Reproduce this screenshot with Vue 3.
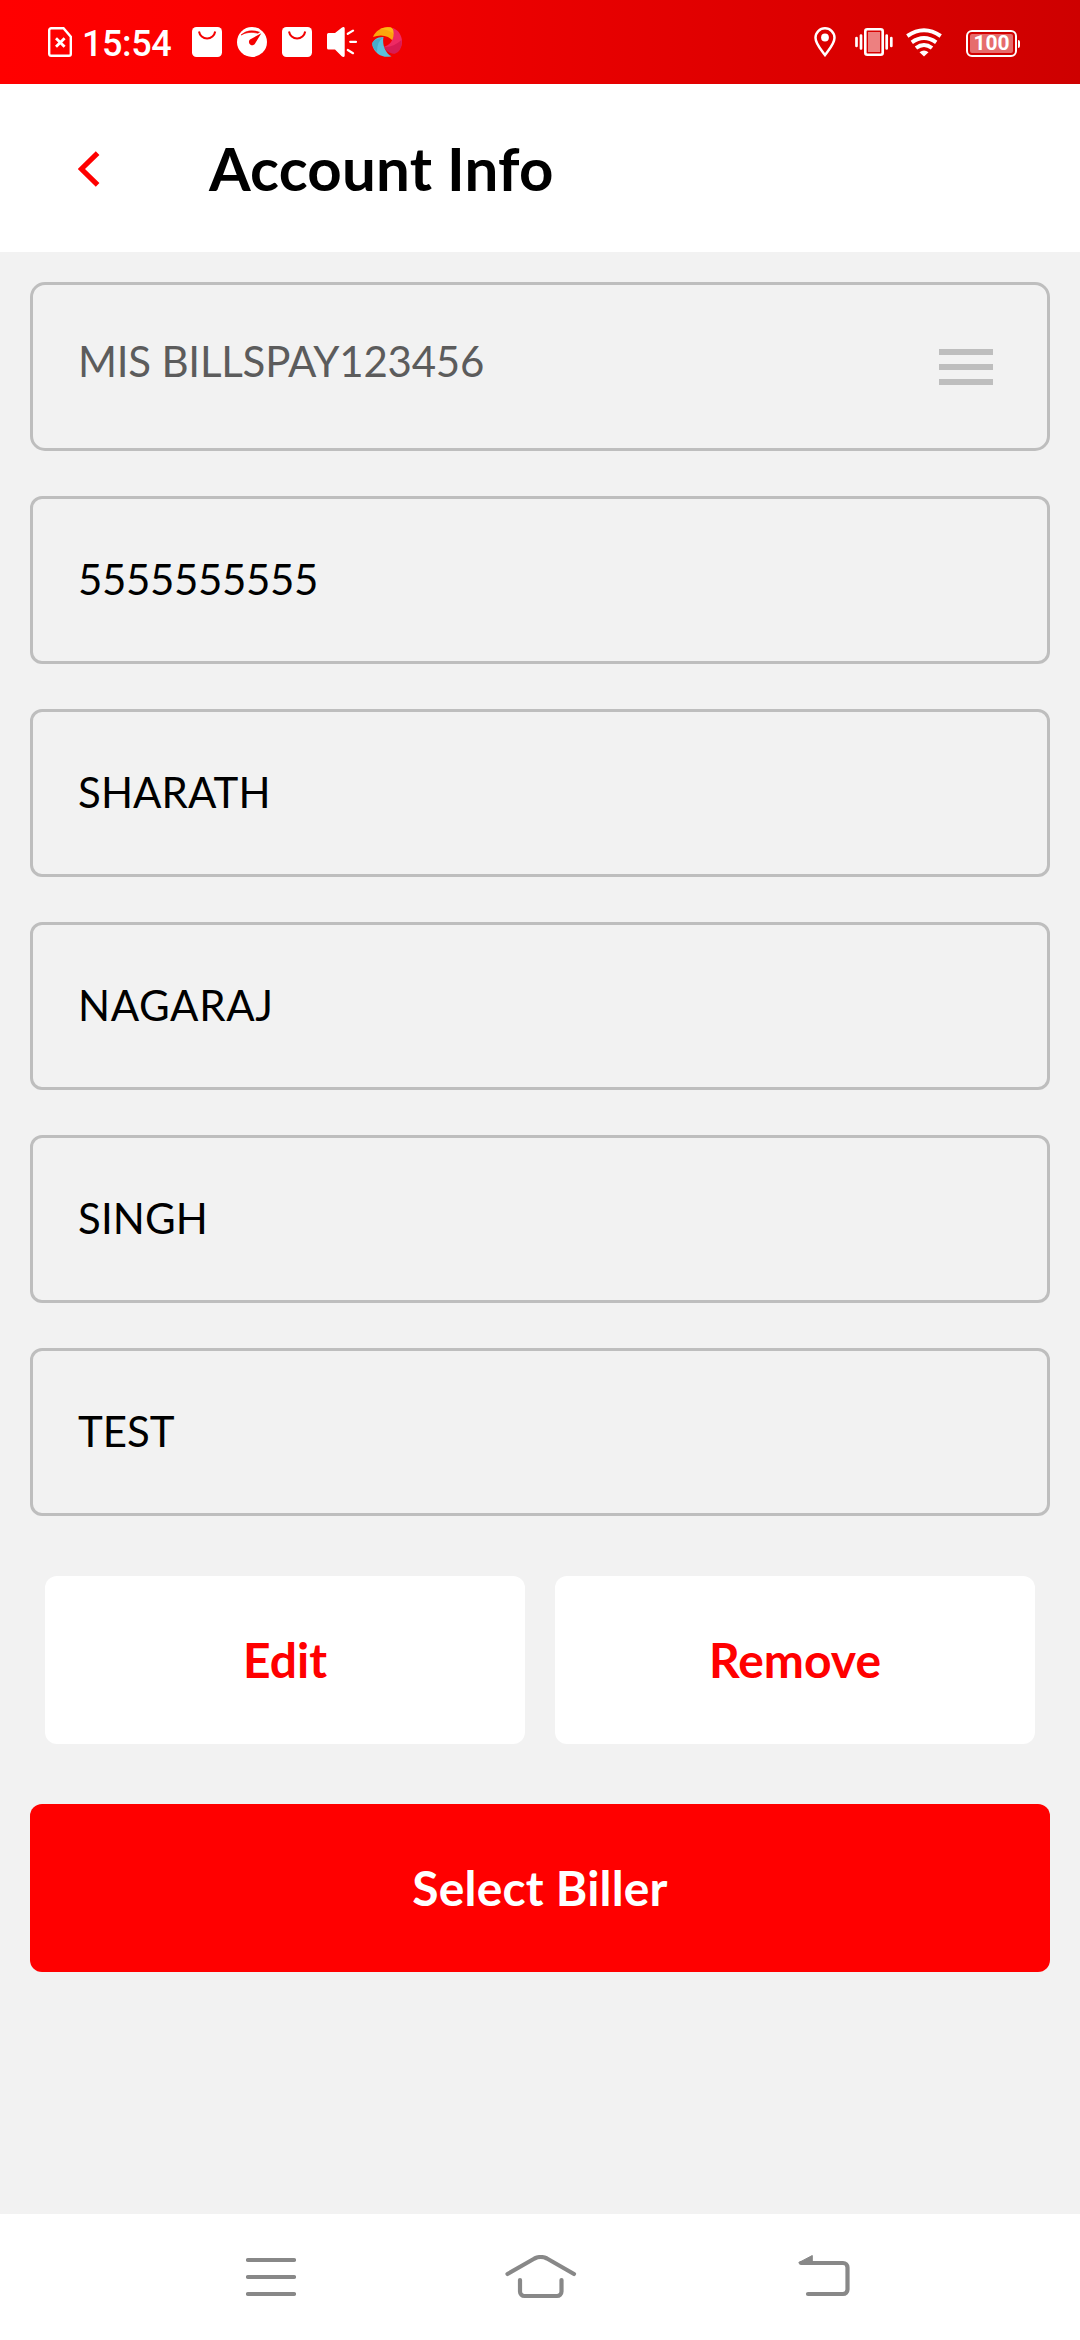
<script setup>
const fields = [
  { text: '5555555555', tracking: -0.36 },
  { text: 'SHARATH', tracking: 0.1 },
  { text: 'NAGARAJ', tracking: 0.65 },
  { text: 'SINGH', tracking: 0.1 },
  { text: 'TEST', tracking: 0 }
]
</script>

<template>
  <div class="screen">
    <div class="status">
      <svg class="sim" width="24" height="30" viewBox="0 0 24 30" fill="none" stroke="#fff" stroke-width="2.4">
        <path d="M3.2 1.2H15.5L22.8 9.8V27a1.8 1.8 0 0 1-1.8 1.8H3.2A2 2 0 0 1 1.2 27V3.200a2 2 0 0 1 2-2z" />
        <path d="M8 11.2l8.6 8.6M16.6 11.2L8 19.8" stroke-width="2.8" />
      </svg>
      <span class="time">15:54</span>
      <div class="notes">
        <svg width="30" height="30" viewBox="0 0 30 30">
          <rect width="30" height="30" rx="4.5" fill="#fff" />
          <path d="M7 4.5a8.2 8.2 0 0 0 16.2 0" fill="none" stroke="#f40000" stroke-width="2" />
        </svg>
        <svg width="30" height="30" viewBox="0 0 30 30">
          <circle cx="15" cy="15" r="15" fill="#fff" />
          <path d="M4 8Q11.5 1.2 22.5 5.2L20.8 6.2Q11.5 3.9 4 8z" fill="#f40000" stroke="#f40000" stroke-width=".6" />
          <path d="M24.3 6.3L18.4 15.9A3.3 3.3 0 1 1 13 12.5z" fill="#f40000" />
        </svg>
        <svg width="30" height="30" viewBox="0 0 30 30">
          <rect width="30" height="30" rx="4.5" fill="#fff" />
          <path d="M7 4.5a8.2 8.2 0 0 0 16.2 0" fill="none" stroke="#f10000" stroke-width="2" />
        </svg>
        <svg width="30" height="30" viewBox="0 0 30 30">
          <path d="M1.5 6H8L15 .4Q17.7-.8 17.7 1.5v27q0 2.3-2.7 1.1L8 22.5H1.5Q0 22.5 0 21V7.5Q0 6 1.5 6z" fill="#fff" />
          <path d="M20.8 6.8L26 3.6M23.2 14.8H29M20.8 23L26 26.2" stroke="#fff" stroke-width="2.2" stroke-linecap="round" />
        </svg>
        <svg width="30" height="30" viewBox="0 0 30 30">
          <path d="M1 10C4 3 11-1 19 .6C23 3 24.5 9 21.5 14.5C17 8.5 9 7 1 10z" fill="#fca50c" />
          <path d="M8 2Q14-.8 19 .6Q23 3 23 8Q17 2 8 2z" fill="#fdb913" />
          <path d="M20.5 .8C28 3.5 32 12 29 20C25.5 24.5 18 25.5 11.5 20C19 18.5 24 10 20.5 .8z" fill="#ee2a63" />
          <path d="M12 20C18 20.5 24 18 29.5 13C31 23 24 28 20 26.5Q14.5 25 12 20z" fill="#d81b54" />
          <path d="M11.5 10C10 17 13 26 19.5 29.3C11 31.5 3 27 .5 19C-.2 14 4 10 11.5 10z" fill="#5bc0dc" />
          <path d="M0 16Q3 11.5 11 11Q5 14 5 25Q.5 21 0 16z" fill="#48adc9" />
        </svg>
      </div>
      <div class="system">
        <svg width="22" height="30" viewBox="0 0 22 30">
          <path d="M11 1.3a9.5 9.5 0 0 1 9.5 9.5C20.5 17 15 22.5 11 28C7 22.5 1.5 17 1.5 10.8A9.5 9.5 0 0 1 11 1.3z" fill="none" stroke="#fff" stroke-width="2.5" />
          <circle cx="11" cy="10.5" r="3.9" fill="#fff" />
        </svg>
        <svg class="vibrate" width="38" height="28" viewBox="0 0 38 28">
          <rect x="10.3" y="1.3" width="17.4" height="25.4" rx="2" fill="none" stroke="#fff" stroke-width="2.6" />
          <rect x="13" y="4" width="12" height="20" fill="#ed8080" />
          <path d="M1.5 10v8M6 7.5v13M31.7 7.5v13M36.3 10v8" stroke="#fff" stroke-width="2.7" stroke-linecap="round" />
        </svg>
        <svg class="wifi" width="36" height="29" viewBox="0 0 36 29">
          <g fill="none" stroke="#fff" stroke-width="4">
            <path d="M1.3 8Q18-3.4 34.7 8" />
            <path d="M5.800 14.300Q18 5.800 30.200 14.300" />
            <path d="M10 20Q18 14 26 20" />
          </g>
          <path d="M13.5 24.2Q18 20.8 22.5 24.2L18 28.500z" fill="#fff" />
        </svg>
        <div class="battery"><span>100</span></div>
        <i class="tip"></i>
      </div>
    </div>

    <header>
      <svg width="22" height="36" viewBox="0 0 22 36">
        <path d="M19.6 2.2L3.4 18L19.6 33.8" fill="none" stroke="#f00" stroke-width="5.2" />
      </svg>
      <h1>Account Info</h1>
    </header>

    <main>
      <div class="field picker">
        <span>MIS BILLSPAY123456</span>
        <div class="bars"><i></i><i></i><i></i></div>
      </div>
      <div v-for="f in fields" :key="f.text" class="field">
        <span :style="{ letterSpacing: f.tracking + 'px' }">{{ f.text }}</span>
      </div>
      <div class="actions">
        <button>Edit</button>
        <button>Remove</button>
      </div>
      <button class="primary">Select Biller</button>
    </main>

    <nav>
      <svg width="50" height="44" viewBox="0 0 50 44">
        <path d="M2 5h46M2 22h46M2 39h46" />
      </svg>
      <svg width="72" height="44" viewBox="0 0 72 44">
        <path d="M2.5 19L29.5 3.5Q35.7 .5 42 3.5L69 19" />
        <path d="M15 25v11.5a4.5 4.5 0 0 0 4.5 4.5h32.5a4.5 4.5 0 0 0 4.5-4.500V25" />
      </svg>
      <svg width="52" height="44" viewBox="0 0 52 44">
        <path d="M3 8h42a4.500 4.500 0 0 1 4.500 4.500v22a4.500 4.500 0 0 1-4.500 4.500H10" />
        <path class="arrow" d="M1 7.500L14.300 .500V8H2z" />
      </svg>
    </nav>
  </div>
</template>

<style>
body {
  margin: 0;
}
</style>

<style scoped>
.screen {
  width: 1080px;
  height: 2340px;
  display: flex;
  flex-direction: column;
  background: #f2f2f2;
  font-family: Lato, sans-serif;
  color: #000;
  overflow: hidden;
}
svg {
  display: block;
  flex: none;
}
.status {
  height: 84px;
  box-sizing: border-box;
  padding: 0 60px 0 48px;
  display: flex;
  align-items: center;
  background: linear-gradient(90deg, #f00 0%, #fb0000 18%, #ce0000 100%);
}
.time {
  width: 110px;
  padding: 3px 0 0 10px;
  font: 500 36px/42px Roboto, sans-serif;
  letter-spacing: -0.4px;
  color: #fff;
}
.notes {
  display: flex;
  gap: 15px;
}
.system {
  margin-left: auto;
  display: flex;
  align-items: center;
}
.vibrate {
  margin-left: 19px;
}
.wifi {
  margin-left: 13px;
}
.battery {
  margin-left: 24px;
  margin-top: 3px;
  width: 51px;
  height: 27px;
  box-sizing: border-box;
  border: 2.5px solid #fff;
  border-radius: 6px;
  padding: 2px;
  display: flex;
}
.battery span {
  flex: 1;
  background: #e66c6c;
  border-radius: 2px;
  font: 700 21px/19px Roboto, sans-serif;
  color: #fff;
  text-align: center;
}
.tip {
  width: 2px;
  height: 8px;
  margin: 3px 0 0 1px;
  background: #fff;
  border-radius: 0 2px 2px 0;
}
header {
  height: 168px;
  display: flex;
  align-items: center;
  padding-left: 78px;
  background: #fff;
}
header svg {
  margin-top: 2px;
}
h1 {
  margin: 0 0 0 109px;
  font-size: 60px;
  line-height: 72px;
  font-weight: 700;
  letter-spacing: 0.22px;
}
main {
  flex: 1;
  padding: 30px 30px 0;
  display: flex;
  flex-direction: column;
}
.field {
  height: 168px;
  box-sizing: border-box;
  flex: none;
  border: 3px solid #bebebe;
  border-radius: 12px;
  margin-bottom: 45px;
  padding: 0 48px 2px 45px;
  display: flex;
  align-items: center;
  justify-content: space-between;
  font-size: 42px;
  line-height: 50px;
}
.picker {
  height: 169px;
  border-radius: 15px;
  color: #5c5c5c;
}
.picker span {
  margin-bottom: 10px;
  letter-spacing: -0.22px;
}
.bars {
  width: 54px;
  display: flex;
  flex-direction: column;
  gap: 9px;
  margin: 3px 6px 0 0;
}
.bars i {
  height: 6px;
  background: #bebebe;
}
button {
  flex: none;
  height: 168px;
  border: 0;
  border-radius: 12px;
  padding: 0;
  background: #fff;
  color: #f00;
  font: 700 48px/58px Lato, sans-serif;
}
.actions {
  display: flex;
  gap: 30px;
  padding: 15px;
  margin-bottom: 45px;
}
.actions button {
  flex: 1;
}
.primary {
  background: #f00;
  color: #fff;
  letter-spacing: 0.2px;
}
nav {
  height: 126px;
  box-sizing: border-box;
  display: flex;
  align-items: center;
  padding-left: 246px;
  gap: 209px;
  background: #fff;
}
nav svg:last-child {
  margin-left: 12px;
}
nav path {
  fill: none;
  stroke: #888;
  stroke-width: 4.2;
  stroke-linecap: round;
}
nav .arrow {
  fill: #888;
  stroke-width: 1;
  stroke-linejoin: round;
}
</style>
